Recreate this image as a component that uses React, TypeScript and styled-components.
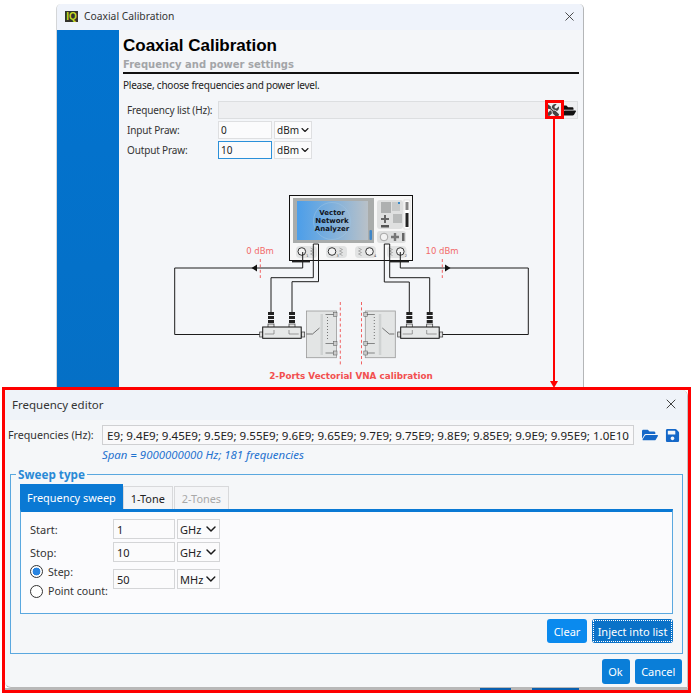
import styled, { createGlobalStyle } from 'styled-components';
import { ChevronDown, X } from 'lucide-react';
import { FaFolderOpen, FaSave, FaTools } from 'react-icons/fa';

const UI_FONT = '"Noto Sans", "Open Sans", "Liberation Sans", sans-serif';
const WIRE = '#1c1c1c';

const GlobalStyle = createGlobalStyle`
  html, body {
    margin: 0;
    padding: 0;
    background: #ffffff;
  }
  body {
    font-family: ${UI_FONT};
    font-size: 11px;
    color: #222;
  }
`;

function Select({ unit }: { unit: string }) {
  return (
    <SelectBox>
      <span>{unit}</span>
      <ChevronDown size={16} strokeWidth={2.2} color="#1a1a1a" />
    </SelectBox>
  );
}

function Connector({ x }: { x: number }) {
  return (
    <g>
      <rect x={x - 3} y={311} width={6} height={3} fill="#222" />
      <rect x={x - 3} y={315} width={6} height={3} fill="#222" />
      <rect x={x - 3} y={319} width={6} height={3} fill="#222" />
      <rect x={x - 3} y={323} width={6} height={3.5} fill="#e8e8e8" stroke="#333" strokeWidth={0.7} />
    </g>
  );
}

function Coupler({ x, c1, c2 }: { x: number; c1: number; c2: number }) {
  return (
    <g>
      <rect x={x - 3} y={331} width={3.5} height={5} fill="#ddd" stroke="#333" strokeWidth={0.7} />
      <rect x={x + 38.5} y={331} width={3.5} height={5} fill="#ddd" stroke="#333" strokeWidth={0.7} />
      <Connector x={c1} />
      <Connector x={c2} />
      <rect x={x} y={326} width={38.5} height={11.3} fill="#e6e8e8" stroke="#111" strokeWidth={1} />
      <path d={`M${x + 2} 333H${c1 + 3}V329M${x + 36} 333H${c2 - 3}V329`} fill="none" stroke="#777" strokeWidth={0.7} />
    </g>
  );
}

function SwitchBox({ x, flip }: { x: number; flip?: boolean }) {
  const pin = flip ? x - 1.5 : x + 27;
  const tipOut = flip ? x + 29 : x;
  const pinDir = flip ? 1 : -1;
  const pinEnd = pin + pinDir * 8 + (flip ? 3 : 0);
  const stripX = flip ? x + 13.5 : x + 14;
  return (
    <g>
      <rect x={x} y={310} width={30} height={46.7} fill="#e3e5e5" stroke="#999" strokeWidth={0.8} />
      <rect x={stripX} y={313} width={2.5} height={41} fill="#cfd2d2" />
      {[313.5, 342.5, 352].map((y) => (
        <g key={y}>
          <rect x={pin} y={y - 2} width={3.5} height={4} fill="#ccc" stroke="#555" strokeWidth={0.5} />
          <line x1={flip ? pin + 3 : pin} y1={y} x2={pinEnd} y2={y} stroke="#444" strokeWidth={0.6} />
        </g>
      ))}
      <line x1={flip ? x + 9 : x + 21} y1={316} x2={flip ? x + 9 : x + 21} y2={340} stroke="#555" strokeWidth={0.8} strokeDasharray="1 2" />
      <path
        d={flip ? `M${tipOut} 333L${x + 24} 333L${x + 17} 327` : `M${tipOut} 333L${x + 6} 333L${x + 13} 327`}
        fill="none"
        stroke="#444"
        strokeWidth={0.7}
      />
    </g>
  );
}

function PortPill({ x, w, cx, mark, n }: { x: number; w: number; cx: number; mark: number; n: number }) {
  return (
    <g>
      <rect x={x} y={245} width={w} height={12} rx={4} fill="#e2e3e3" />
      <circle cx={cx} cy={250.5} r={3.8} fill="#f4f4f4" stroke="#333" strokeWidth={1} />
      <path
        d={`M${mark - 1.5} 247l3 1.5l-3 1.5l3 1.5l-3 1.5l3 1.5`}
        fill="none"
        stroke="#8a8a8a"
        strokeWidth={0.6}
      />
      <text x={cx + 4.5} y={255.5} fontSize={3.5} fill="#444" fontFamily="DejaVu Sans, sans-serif">
        {n}
      </text>
    </g>
  );
}

function VnaDiagram() {
  return (
    <DiagramSvg viewBox="0 0 380 200" aria-label="2-Ports Vectorial VNA calibration">
      <defs>
        <linearGradient id="vna-screen" x1="0" y1="0" x2="1" y2="0">
          <stop offset="0" stopColor="#4c9ee9" />
          <stop offset="0.5" stopColor="#7fb0dc" />
          <stop offset="1" stopColor="#b9c1c8" />
        </linearGradient>
      </defs>
      <g transform="translate(-160 -185)">
        <rect x={292} y={259} width={18} height={2.4} fill="#222" />
        <rect x={390} y={259} width={19} height={2.4} fill="#222" />
        <rect x={289.5} y={194.5} width={123} height={65} fill="#f7f7f7" stroke="#111" strokeWidth={1} />
        <rect x={293} y={197} width={81} height={45} fill="#a9acab" />
        <rect x={297} y={200} width={71} height={39} fill="url(#vna-screen)" />
        <circle cx={332} cy={220} r={18.5} fill="none" stroke="#9fc4e2" strokeWidth={0.5} />
        <ScreenText x={332} y={213.5}>Vector</ScreenText>
        <ScreenText x={332} y={221.5}>Network</ScreenText>
        <ScreenText x={332} y={229.5}>Analyzer</ScreenText>
        <rect x={369.5} y={229} width={2.5} height={10} rx={1} fill="#3f86c8" />

        <rect x={377} y={199} width={26} height={29} rx={3} fill="#dfe0e0" />
        <rect x={381} y={201} width={10} height={11} fill="#aeb0b0" />
        <rect x={392} y={201} width={8} height={9} fill="#c7c9c9" />
        <rect x={398} y={201} width={2} height={2} fill="#3a8ac8" />
        <rect x={393} y={213} width={9} height={9} fill="#b9bbbb" />
        <path d="M385 214v8M381 218h8" stroke="#666" strokeWidth={2} />
        <rect x={381} y={224} width={8} height={2.5} fill="#555" />
        <rect x={404} y={199} width={6} height={29} fill="#fff" stroke="#ccc" strokeWidth={0.5} />
        <rect x={405.5} y={201} width={3} height={8} fill="#333" opacity={0.6} />
        <rect x={405.5} y={212} width={3} height={14} fill="#222" />
        <rect x={377} y={230} width={29} height={12} rx={3} fill="#dedfdf" />
        <circle cx={384} cy={236} r={3.8} fill="#f2f2f2" stroke="#888" strokeWidth={0.7} />
        <path d="M395 232v8M391 236h8" stroke="#777" strokeWidth={2.4} />
        <rect x={402} y={232} width={2.5} height={8} fill="#666" />

        <PortPill x={296} w={21} cx={301.8} mark={312} n={1} />
        <PortPill x={326} w={21} cx={332} mark={341} n={3} />
        <PortPill x={355} w={21} cx={369.5} mark={360} n={4} />
        <PortPill x={387} w={19.5} cx={400.3} mark={391} n={2} />

        <g fill="none" stroke={WIRE} strokeWidth={1}>
          <path d="M302.7 251V267H174.7V333.5H261" />
          <path d="M271 311V276.7H313.3V243H318.5V280.7H292V311" />
          <path d="M409.3 311V281H384.3V243H389.7V276.7H429.7V311" />
          <path d="M400.3 251V267H528.3V333.5H442" />
        </g>
        <path d="M251.5 267L257 263.5V270.5Z" fill="#111" />
        <path d="M450.5 267L445 263.5V270.5Z" fill="#111" />

        <Coupler x={262.7} c1={271} c2={292} />
        <Coupler x={400.7} c1={409.3} c2={429.7} />
        <SwitchBox x={306.5} />
        <SwitchBox x={365.3} flip />

        <g stroke="#f05050" strokeWidth={0.9} strokeDasharray="3 2.4" fill="none">
          <line x1={260.3} y1={258} x2={260.3} y2={277} />
          <line x1={442.3} y1={258} x2={442.3} y2={277} />
          <line x1={340.3} y1={301} x2={340.3} y2={364} />
          <line x1={361.5} y1={301} x2={361.5} y2={364} />
        </g>
        <PowerText x={260} y={252.5}>0 dBm</PowerText>
        <PowerText x={442} y={252.5}>10 dBm</PowerText>
        <CaptionText x={351} y={378}>2-Ports Vectorial VNA calibration</CaptionText>
      </g>
    </DiagramSvg>
  );
}

export default function App() {
  return (
    <>
      <GlobalStyle />
      <Page>
        <BackWindow>
          <TitleBar>
            <TitleGroup>
              <AppLogo>IQ</AppLogo>
              <TitleText>Coaxial Calibration</TitleText>
            </TitleGroup>
            <X size={15} strokeWidth={1.4} color="#333" />
          </TitleBar>
          <WindowBody>
            <Sidebar />
            <WizardPane>
              <WizardTitle>Coaxial Calibration</WizardTitle>
              <WizardSubtitle>Frequency and power settings</WizardSubtitle>
              <WizardHint>Please, choose frequencies and power level.</WizardHint>
              <PowerForm>
                <PowerRow>
                  <PowerLabel>Frequency list (Hz):</PowerLabel>
                  <ListField>
                    <ToolIcon>
                      <FaTools size={13} color="#444" />
                    </ToolIcon>
                    <FaFolderOpen size={15} color="#111" />
                  </ListField>
                </PowerRow>
                <PowerRow>
                  <PowerLabel>Input Praw:</PowerLabel>
                  <PowerInput readOnly value="0" />
                  <PowerSelect>
                    <span>dBm</span>
                    <ChevronDown size={16} strokeWidth={2.2} color="#1a1a1a" />
                  </PowerSelect>
                </PowerRow>
                <PowerRow>
                  <PowerLabel>Output Praw:</PowerLabel>
                  <PowerInput readOnly value="10" $focused />
                  <PowerSelect>
                    <span>dBm</span>
                    <ChevronDown size={16} strokeWidth={2.2} color="#1a1a1a" />
                  </PowerSelect>
                </PowerRow>
              </PowerForm>
              <VnaDiagram />
            </WizardPane>
          </WindowBody>
        </BackWindow>

        <EditorFrame>
          <EditorDialog>
            <EditorTitleBar>
              <EditorTitle>Frequency editor</EditorTitle>
              <X size={16} strokeWidth={1.4} color="#333" />
            </EditorTitleBar>
            <EditorBody>
              <FrequenciesRow>
                <FrequenciesLabel>Frequencies (Hz):</FrequenciesLabel>
                <FrequenciesField>
                  <span>E9; 9.4E9; 9.45E9; 9.5E9; 9.55E9; 9.6E9; 9.65E9; 9.7E9; 9.75E9; 9.8E9; 9.85E9; 9.9E9; 9.95E9; 1.0E10</span>
                </FrequenciesField>
                <FileIcons>
                  <FaFolderOpen size={16} color="#1568c8" />
                  <FaSave size={15} color="#1568c8" />
                </FileIcons>
              </FrequenciesRow>
              <SpanNote>Span = 9000000000 Hz; 181 frequencies</SpanNote>

              <SweepGroup>
                <SweepLegend>Sweep type</SweepLegend>
                <TabStrip>
                  <Tab $active>Frequency sweep</Tab>
                  <Tab>1-Tone</Tab>
                  <Tab $disabled>2-Tones</Tab>
                </TabStrip>
                <TabPanel>
                  <FieldRow>
                    <FieldLabel>Start:</FieldLabel>
                    <ValueInput readOnly value="1" />
                    <Select unit="GHz" />
                  </FieldRow>
                  <FieldRow>
                    <FieldLabel>Stop:</FieldLabel>
                    <ValueInput readOnly value="10" />
                    <Select unit="GHz" />
                  </FieldRow>
                  <RadioRow>
                    <RadioStack>
                      <RadioLine>
                        <Radio $checked />
                        Step:
                      </RadioLine>
                      <RadioLine>
                        <Radio />
                        Point count:
                      </RadioLine>
                    </RadioStack>
                    <ValueInput readOnly value="50" />
                    <Select unit="MHz" />
                  </RadioRow>
                </TabPanel>
                <GroupActions>
                  <ActionButton $tone="light">Clear</ActionButton>
                  <ActionButton $tone="focus">
                    <FocusRing>Inject into list</FocusRing>
                  </ActionButton>
                </GroupActions>
              </SweepGroup>

              <DialogActions>
                <ActionButton $tone="plain" $width={28}>Ok</ActionButton>
                <ActionButton $tone="plain" $width={47.5}>Cancel</ActionButton>
              </DialogActions>
            </EditorBody>
          </EditorDialog>
          <UnderStrip>
            <UnderButton $width={31} />
            <UnderGap $width={21} />
            <UnderButton $width={47} />
          </UnderStrip>
        </EditorFrame>

        <ToolMarker />
        <LinkLine />
        <LinkHead />
      </Page>
    </>
  );
}

const Page = styled.div`
  position: relative;
  width: 696px;
  height: 695px;
  overflow: hidden;
  background: #ffffff;
`;

const BackWindow = styled.div`
  margin: 4px 0 0 56px;
  width: 528px;
  height: 383px;
  box-sizing: border-box;
  border-right: 1px solid #b4b6b8;
  border-left: 1px solid #d4d6d8;
  border-radius: 5px 5px 0 0;
  display: flex;
  flex-direction: column;
  background: #f4f6f9;
`;

const TitleBar = styled.div`
  flex: 0 0 26px;
  box-sizing: border-box;
  display: flex;
  align-items: center;
  justify-content: space-between;
  padding: 0 6px 2px 8px;
  background: #eff3fb;
  border-radius: 5px 5px 0 0;
`;

const TitleGroup = styled.div`
  display: flex;
  align-items: center;
  gap: 6px;
`;

const AppLogo = styled.span`
  width: 13px;
  height: 11px;
  background: #33332c;
  color: #c9dc24;
  font: bold 10px/11px "Liberation Sans", sans-serif;
  text-align: center;
`;

const TitleText = styled.span`
  font-size: 10.3px;
  color: #333;
`;

const WindowBody = styled.div`
  flex: 1;
  display: flex;
  min-height: 0;
`;

const Sidebar = styled.div`
  flex: 0 0 62px;
  background: linear-gradient(180deg, #0273cf 0%, #0570c6 100%);
`;

const WizardPane = styled.div`
  flex: 1;
  display: flex;
  flex-direction: column;
  padding: 5px 4px 0 4px;
  min-width: 0;
`;

const WizardTitle = styled.div`
  font: bold 17px/22px "Liberation Sans", sans-serif;
  color: #000;
`;

const WizardSubtitle = styled.div`
  font: bold 10px/15px "DejaVu Sans", sans-serif;
  color: #a3a5a8;
  border-bottom: 2px solid #111;
`;

const WizardHint = styled.div`
  margin-top: 3px;
  font-size: 10px;
  letter-spacing: -0.22px;
  line-height: 16px;
  color: #222;
`;

const PowerForm = styled.div`
  margin: 8px 0 0 4px;
  display: flex;
  flex-direction: column;
  gap: 2px;
`;

const PowerRow = styled.div`
  display: flex;
  align-items: center;
  gap: 2px;
  height: 18px;
`;

const PowerLabel = styled.span`
  flex: 0 0 89px;
  min-width: 0;
  font-size: 10px;
  letter-spacing: -0.15px;
  color: #333;
  white-space: nowrap;
`;

const ListField = styled.div`
  flex: 0 0 360px;
  height: 18px;
  box-sizing: border-box;
  display: flex;
  align-items: center;
  justify-content: flex-end;
  gap: 1px;
  padding-right: 1px;
  background: #eeeff1;
  border: 1px solid #dcdee0;
`;

const ToolIcon = styled.span`
  display: flex;
  width: 16px;
  justify-content: center;
`;

const PowerInput = styled.input<{ $focused?: boolean }>`
  width: 54px;
  height: 18px;
  box-sizing: border-box;
  padding: 0 2px;
  margin: 0;
  outline: none;
  font: 10px ${UI_FONT};
  color: #222;
  background: #fbfbfc;
  border: 1px solid ${(p) => (p.$focused ? '#2b90d9' : '#dedfe1')};
`;

const PowerSelect = styled.div`
  width: 38px;
  height: 18px;
  box-sizing: border-box;
  display: flex;
  align-items: center;
  justify-content: space-between;
  padding: 0 0 0 2px;
  font-size: 10px;
  color: #222;
  background: #fbfbfc;
  border: 1px solid #dedfe1;
`;

const DiagramSvg = styled.svg`
  display: block;
  flex: none;
  width: 380px;
  height: 200px;
  margin: 27px 0 0 37px;
`;

const ScreenText = styled.text`
  font: bold 7px "DejaVu Sans", sans-serif;
  fill: #10141c;
  text-anchor: middle;
`;

const PowerText = styled.text`
  font: 8.5px "DejaVu Sans", sans-serif;
  fill: #f26a6a;
  text-anchor: middle;
`;

const CaptionText = styled.text`
  font: bold 8.8px "DejaVu Sans", sans-serif;
  fill: #f25050;
  text-anchor: middle;
`;

const EditorFrame = styled.div`
  margin-left: 2px;
  width: 689px;
  height: 305.5px;
  box-sizing: border-box;
  border: 3px solid #fe0000;
  display: flex;
  flex-direction: column;
  background: #ffffff;
`;

const EditorDialog = styled.div`
  flex: 1;
  min-height: 0;
  display: flex;
  flex-direction: column;
  background: #f5f7f9;
  border-right: 1px solid #c4c4c4;
  border-bottom: 1px solid #b8b8b8;
  border-radius: 0 6px 0 6px;
`;

const EditorTitleBar = styled.div`
  flex: 0 0 30px;
  box-sizing: border-box;
  display: flex;
  align-items: center;
  justify-content: space-between;
  padding: 0 8px 2px 7px;
  background: #eff3f9;
  border-radius: 0 6px 0 0;
`;

const EditorTitle = styled.span`
  font-size: 11.5px;
  color: #333;
`;

const EditorBody = styled.div`
  flex: 1;
  display: flex;
  flex-direction: column;
  padding: 5px 5px 0 3px;
  min-height: 0;
`;

const FrequenciesRow = styled.div`
  display: flex;
  align-items: center;
  height: 20px;
`;

const FrequenciesLabel = styled.span`
  flex: 0 0 94px;
  font-size: 10.7px;
  color: #333;
  white-space: nowrap;
`;

const FrequenciesField = styled.div`
  flex: 0 0 532px;
  height: 20px;
  box-sizing: border-box;
  overflow: hidden;
  display: flex;
  align-items: center;
  justify-content: flex-end;
  padding: 0 4px 0 2px;
  background: #f9f9fa;
  border: 1px solid #cfd0d2;
  font-size: 11.6px;
  color: #222;
  white-space: nowrap;

  span {
    flex: none;
  }
`;

const FileIcons = styled.div`
  display: flex;
  align-items: center;
  gap: 7px;
  margin-left: 8px;
`;

const SpanNote = styled.div`
  margin: 2px 0 0 94px;
  font-size: 11.4px;
  line-height: 16px;
  font-style: italic;
  color: #1f72cf;
`;

const SweepGroup = styled.div`
  position: relative;
  margin: 11px 0 0 2px;
  width: 673px;
  height: 180px;
  box-sizing: border-box;
  border: 1px solid #5aa8df;
  padding: 9px 9px 0 9px;
  display: flex;
  flex-direction: column;
`;

const SweepLegend = styled.span`
  position: absolute;
  top: -8px;
  left: 5px;
  padding: 0 2px;
  background: #f5f7f9;
  font: bold 11.7px/15px ${UI_FONT};
  color: #2a8ad6;
`;

const TabStrip = styled.div`
  display: flex;
  align-items: flex-end;
  height: 25px;
  flex: none;
`;

const Tab = styled.div<{ $active?: boolean; $disabled?: boolean }>`
  box-sizing: border-box;
  height: ${(p) => (p.$active ? '25px' : '23px')};
  padding: 0 ${(p) => (p.$active ? '6px' : '7px')};
  display: flex;
  align-items: center;
  font-size: 10.9px;
  color: ${(p) => (p.$active ? '#ffffff' : p.$disabled ? '#a8a8a8' : '#222')};
  background: ${(p) => (p.$active ? '#0a79d4' : '#f4f5f7')};
  border: 1px solid ${(p) => (p.$active ? '#0a79d4' : '#d8d9db')};
  border-bottom: none;
  margin-right: ${(p) => (p.$active ? '0' : '1px')};
`;

const TabPanel = styled.div`
  flex: 0 0 105px;
  box-sizing: border-box;
  border: 1px solid #5aa8df;
  border-top: 3px solid #0a79d4;
  background: #fbfbfd;
  padding: 7px 0 0 9px;
  display: flex;
  flex-direction: column;
`;

const FieldRow = styled.div`
  display: flex;
  align-items: center;
  gap: 2px;
  height: 20px;

  & + & {
    margin-top: 3px;
  }
`;

const FieldLabel = styled.span`
  flex: 0 0 81px;
  font-size: 11px;
  color: #333;
`;

const RadioRow = styled.div`
  display: flex;
  align-items: flex-start;
  gap: 2px;
  height: 39px;

  input {
    margin-top: 7px;
  }
  & > div:last-child {
    margin-top: 7px;
  }
`;

const RadioStack = styled.div`
  flex: 0 0 81px;
  display: flex;
  flex-direction: column;
`;

const RadioLine = styled.div`
  height: 19.5px;
  display: flex;
  align-items: center;
  gap: 5px;
  font-size: 10.6px;
  color: #333;
  white-space: nowrap;
`;

const Radio = styled.span<{ $checked?: boolean }>`
  flex: none;
  width: 13px;
  height: 13px;
  box-sizing: border-box;
  border-radius: 50%;
  border: 1px solid #333;
  background: ${(p) =>
    p.$checked ? 'radial-gradient(circle, #2a84e0 0 3.6px, #ffffff 4.2px)' : '#ffffff'};
`;

const ValueInput = styled.input`
  width: 62px;
  height: 20px;
  box-sizing: border-box;
  margin: 0;
  padding: 0 3px;
  outline: none;
  font: 11px ${UI_FONT};
  color: #222;
  background: #fbfbfc;
  border: 1px solid #d4d5d7;
`;

const SelectBox = styled.div`
  width: 43px;
  height: 20px;
  box-sizing: border-box;
  display: flex;
  align-items: center;
  justify-content: space-between;
  padding: 0 0 0 2px;
  font-size: 11px;
  color: #222;
  background: #fbfbfc;
  border: 1px solid #d4d5d7;
`;

const GroupActions = styled.div`
  display: flex;
  justify-content: flex-end;
  gap: 5px;
  margin-top: 5px;
  height: 24px;
  flex: none;
`;

const tones = {
  light: '#0a8aee',
  focus: '#0a72c8',
  plain: '#0a7ed8',
};

const ActionButton = styled.div<{ $tone: 'light' | 'focus' | 'plain'; $width?: number }>`
  box-sizing: border-box;
  display: flex;
  align-items: center;
  justify-content: center;
  min-width: ${(p) => (p.$width ? `${p.$width}px` : p.$tone === 'light' ? '40px' : '81px')};
  padding: ${(p) => (p.$tone === 'focus' ? '1px' : '0')};
  border-radius: 3px;
  background: ${(p) => tones[p.$tone]};
  color: #ffffff;
  font-size: 11px;
`;

const FocusRing = styled.span`
  flex: 1;
  align-self: stretch;
  display: flex;
  align-items: center;
  justify-content: center;
  border: 1px dotted #ffffff;
`;

const DialogActions = styled.div`
  display: flex;
  justify-content: flex-end;
  gap: 5px;
  height: 25px;
  margin: 4.5px 0 0 0;
  flex: none;
`;

const UnderStrip = styled.div`
  flex: 0 0 1.5px;
  display: flex;
  padding-left: 475px;
  background: #b8b8b8;
`;

const UnderButton = styled.div<{ $width: number }>`
  width: ${(p) => p.$width}px;
  background: #0a5fae;
`;

const UnderGap = styled.div<{ $width: number }>`
  width: ${(p) => p.$width}px;
`;

const ToolMarker = styled.div`
  position: absolute;
  left: 545px;
  top: 100px;
  width: 19px;
  height: 19px;
  box-sizing: border-box;
  border: 3px solid #fe0000;
`;

const LinkLine = styled.div`
  position: absolute;
  left: 552.5px;
  top: 119px;
  width: 2px;
  height: 264px;
  background: #fe0000;
`;

const LinkHead = styled.div`
  position: absolute;
  left: 549.5px;
  top: 381px;
  width: 0;
  height: 0;
  border-left: 4px solid transparent;
  border-right: 4px solid transparent;
  border-top: 7px solid #fe0000;
`;
